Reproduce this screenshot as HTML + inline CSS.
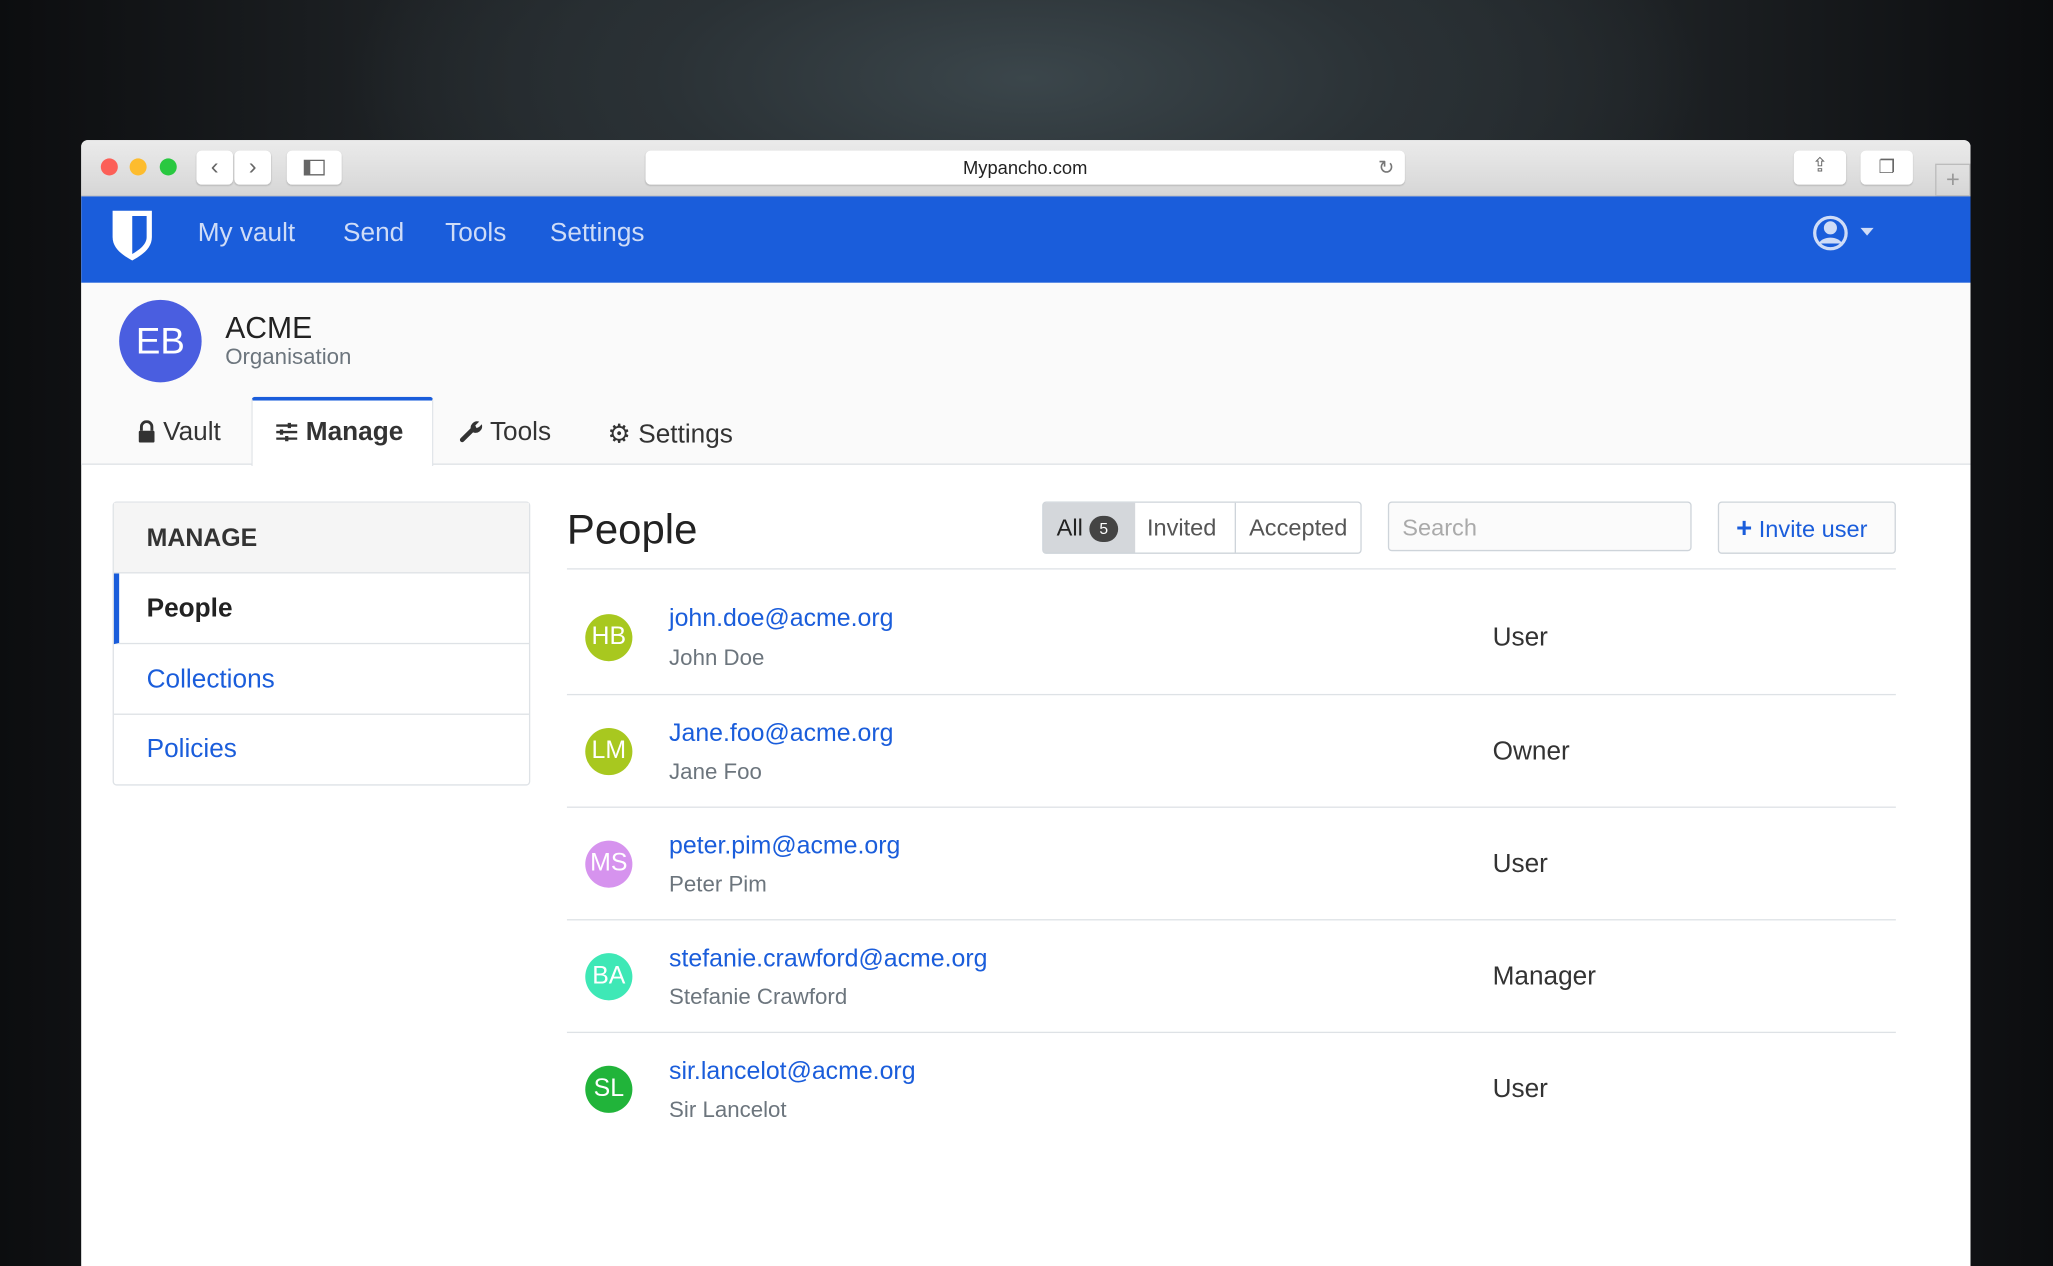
<!DOCTYPE html>
<html><head><meta charset="utf-8"><style>
*{box-sizing:border-box;margin:0;padding:0}
html,body{width:2053px;height:1266px;overflow:hidden;background:#0d0e10}
#s{position:absolute;left:0;top:0;width:1568px;height:967px;transform:scale(1.30931);transform-origin:0 0;font-family:"Liberation Sans",sans-serif;
background:radial-gradient(ellipse 520px 190px at 784px 60px,#3b464b 0%,#2a3135 55%,rgba(13,14,16,0) 100%),linear-gradient(90deg,#0c0d0f 0%,#1e2225 20%,#30383c 50%,#1e2225 80%,#0c0d0f 100%);}
.a{position:absolute}
#win{left:62px;top:107px;width:1443px;height:860px;background:#fff;border-radius:5px 5px 0 0;overflow:hidden}
#tb{left:0;top:0;width:1443px;height:43px;background:linear-gradient(#ebebeb,#d6d6d6);border-bottom:1px solid #c4c4c4}
.dot{width:13px;height:13px;border-radius:50%;top:14px}
.btn{background:#fff;border-radius:4px;height:26px;top:8px;box-shadow:0 1px 1px #bbb;color:#666;font-size:18px;text-align:center;line-height:24px}
#nav{left:0;top:43px;width:1443px;height:66px;background:#1a5ddb}
#nav span{position:absolute;top:16px;color:#cfdcf7;font-size:20px}
#hdr{left:0;top:109px;width:1443px;height:139px;background:#fafafa;border-bottom:1px solid #dee2e6}
.tab{position:absolute;top:212px;font-size:20px;color:#333}
.tab svg{vertical-align:-2px}
.lnk{color:#1a5ddb}
.row{position:absolute;left:371px;width:1015px;height:86px;border-top:1px solid #dee2e6}
.av{position:absolute;left:14px;top:34px;width:36px;height:36px;border-radius:50%;color:#fff;font-size:19px;line-height:36px;text-align:center}
.em{position:absolute;left:78px;top:29px;font-size:19px;color:#1a5ddb}
.nm{position:absolute;left:78px;top:58px;font-size:17px;color:#6c757d}
.rl{position:absolute;left:707px;top:41px;font-size:20px;color:#333}
</style></head><body><div id="s">
<div id="win" class="a">
 <div id="tb" class="a">
  <div class="a dot" style="left:15px;background:#fc5f57"></div>
  <div class="a dot" style="left:37px;background:#fdbc2e"></div>
  <div class="a dot" style="left:60px;background:#29c840"></div>
  <div class="a btn" style="left:88px;width:28px">‹</div>
  <div class="a btn" style="left:117px;width:28px">›</div>
  <div class="a btn" style="left:157px;width:42px"><div style="width:16px;height:12px;border:1.5px solid #666;margin:7px auto;border-left-width:5px"></div></div>
  <div class="a btn" style="left:431px;width:580px;color:#222;font-size:14px;line-height:27px">Mypancho.com<span style="position:absolute;right:8px;color:#777;font-size:15px">↻</span></div>
  <div class="a btn" style="left:1308px;width:40px;font-size:15px">⇪</div>
  <div class="a btn" style="left:1359px;width:40px;font-size:14px">❐</div>
  <div class="a" style="left:1416px;top:18px;width:27px;height:25px;border:1px solid #bbb;color:#999;font-size:18px;text-align:center;line-height:22px">+</div>
 </div>
 <div id="nav" class="a">
  <svg class="a" style="left:23px;top:10px" width="32" height="40" viewBox="0 0 32 40"><path d="M1 1H31V21C31 30 23 35 16 39C9 35 1 30 1 21Z" fill="#fff"/><path d="M16 5H27V21C27 27 21 31 16 34Z" fill="#1a5ddb"/></svg>
  <span style="left:89px;top:17px">My vault</span><span style="left:200px;top:17px">Send</span><span style="left:278px;top:17px">Tools</span><span style="left:358px;top:17px">Settings</span>
  <svg class="a" style="left:1322px;top:13px" width="28" height="30" viewBox="0 0 28 30"><circle cx="14" cy="15" r="12" fill="none" stroke="#cfdcf7" stroke-width="2.5"/><circle cx="14" cy="11" r="5" fill="#cfdcf7"/><path d="M5 23C8 17 20 17 23 23" fill="#cfdcf7"/></svg>
  <div class="a" style="left:1359px;top:24px;border:5px solid transparent;border-top:6px solid #cfdcf7"></div>
 </div>
 <div id="hdr" class="a">
  <div class="a" style="left:29px;top:13px;width:63px;height:63px;border-radius:50%;background:#4a5ee0;color:#fff;font-size:28px;text-align:center;line-height:63px">EB</div>
  <div class="a" style="left:110px;top:21px;font-size:23px;color:#222">ACME</div>
  <div class="a" style="left:110px;top:47px;font-size:17px;color:#6c757d">Organisation</div>
  <div class="a" style="left:130px;top:87px;width:139px;height:53px;background:#fff;border:1px solid #dee2e6;border-top:3px solid #1a5ddb;border-bottom:none;border-radius:3px 3px 0 0"></div>
 </div>
 <div class="tab" style="left:43px"><svg width="14" height="17" viewBox="0 0 14 17"><path d="M3 8V5a4 4 0 0 1 8 0v3" fill="none" stroke="#333" stroke-width="2.2"/><rect x="1" y="8" width="12" height="9" rx="1" fill="#333"/></svg> Vault</div>
 <div class="tab" style="left:148px;font-weight:bold;color:#333"><svg width="18" height="16" viewBox="0 0 18 16" stroke="#333" stroke-width="1.8"><path d="M1 3H17M1 8H17M1 13H17"/><path d="M11 1V5M5 6V10M9 11V15" stroke-width="2.5"/></svg> Manage</div>
 <div class="tab" style="left:289px"><svg width="18" height="18" viewBox="0 0 18 18"><path d="M2 16L10 8" stroke="#333" stroke-width="3.5" stroke-linecap="round"/><path d="M9 9A5 5 0 0 1 15 2L12 5L13 7L15 6L17 4A5 5 0 0 1 10 10Z" fill="#333"/></svg> Tools</div>
 <div class="tab" style="left:402px">⚙ Settings</div>

 <div class="a" style="left:24px;top:276px;width:319px;height:217px;border:1px solid #dee2e6;border-radius:3px">
  <div class="a" style="left:0;top:0;width:317px;height:54px;background:#f5f5f5;border-bottom:1px solid #dee2e6;font-weight:bold;font-size:19px;color:#333;padding:17px 0 0 25px">MANAGE</div>
  <div class="a" style="left:0;top:54px;width:317px;height:54px;border-left:4px solid #1a5ddb;border-bottom:1px solid #dee2e6;font-weight:bold;font-size:20px;color:#222;padding:16px 0 0 21px">People</div>
  <div class="a lnk" style="left:25px;top:124px;font-size:20px">Collections</div>
  <div class="a" style="left:0;top:161px;width:317px;border-top:1px solid #dee2e6"></div>
  <div class="a lnk" style="left:25px;top:177px;font-size:20px">Policies</div>
 </div>

 <div class="a" style="left:371px;top:279px;font-size:32px;color:#222">People</div>
 <div class="a" style="left:734px;top:276px;width:244px;height:40px;border:1px solid #ced4da;border-radius:3px;font-size:18px;color:#555">
  <div class="a" style="left:0;top:0;width:70px;height:38px;background:#d4d7db;padding:9px 0 0 10px;color:#222">All <span style="display:inline-block;width:22px;height:20px;border-radius:10px;background:#444;color:#fff;font-size:12px;text-align:center;line-height:20px;vertical-align:1px">5</span></div>
  <div class="a" style="left:79px;top:9px">Invited</div>
  <div class="a" style="left:146px;top:0;height:38px;border-left:1px solid #ced4da"></div>
  <div class="a" style="left:157px;top:9px">Accepted</div>
 </div>
 <div class="a" style="left:998px;top:276px;width:232px;height:38px;border:1px solid #ced4da;border-radius:3px;background:#fbfbfb;color:#aaa;font-size:18px;padding:9px 0 0 10px">Search</div>
 <div class="a" style="left:1250px;top:276px;width:136px;height:40px;border:1px solid #ced4da;border-radius:3px;background:#fbfbfb;color:#1a5ddb;font-size:18px;padding:8px 0 0 13px"><b style="font-size:21px">+</b> Invite user</div>

 <div class="row" style="top:327px"><div class="av" style="background:#a8c81f;top:34px">HB</div><div class="em" style="top:27px">john.doe@acme.org</div><div class="nm">John Doe</div><div class="rl">User</div></div>
 <div class="row" style="top:423px"><div class="av" style="background:#a8c81f;top:25px">LM</div><div class="em" style="top:19px">Jane.foo@acme.org</div><div class="nm" style="top:49px">Jane Foo</div><div class="rl" style="top:32px">Owner</div></div>
 <div class="row" style="top:509px"><div class="av" style="background:#d693ee;top:25px">MS</div><div class="em" style="top:19px">peter.pim@acme.org</div><div class="nm" style="top:49px">Peter Pim</div><div class="rl" style="top:32px">User</div></div>
 <div class="row" style="top:595px"><div class="av" style="background:#3ee8b6;top:25px">BA</div><div class="em" style="top:19px">stefanie.crawford@acme.org</div><div class="nm" style="top:49px">Stefanie Crawford</div><div class="rl" style="top:32px">Manager</div></div>
 <div class="row" style="top:681px"><div class="av" style="background:#21b43a;top:25px">SL</div><div class="em" style="top:19px">sir.lancelot@acme.org</div><div class="nm" style="top:49px">Sir Lancelot</div><div class="rl" style="top:32px">User</div></div>
</div>
</div></body></html>
